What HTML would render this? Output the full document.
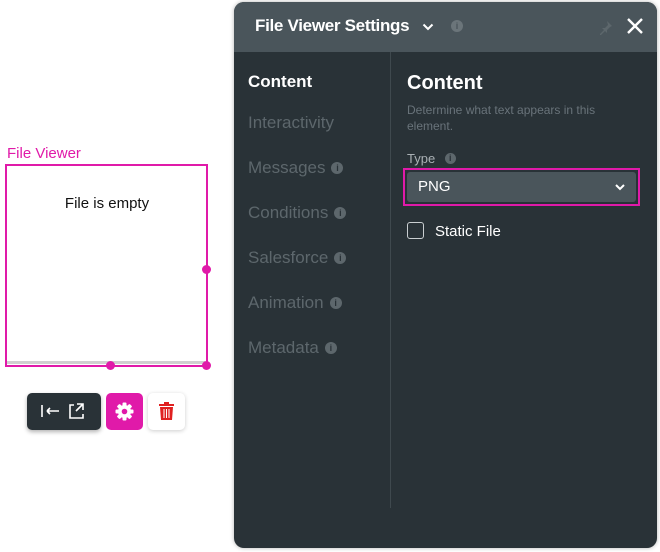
<!DOCTYPE html>
<html><head><style>
body{margin:0;width:660px;height:552px;background:#fff;position:relative;font-family:"Liberation Sans",sans-serif;overflow:hidden}
.a{position:absolute}
.nav{position:absolute;left:248px;font-size:17px;color:#5d676c}
.i{display:inline-block;width:12px;height:12px;border-radius:50%;background:#5d676c;color:#293237;font-size:9px;text-align:center;line-height:12px;font-weight:bold;vertical-align:2px;margin-left:6px}
</style></head><body>
<div class="a" style="left:7px;top:145px;font-size:15px;color:#e01aa9">File Viewer</div>
<div class="a" style="left:5px;top:164px;width:199px;height:199px;border:2px solid #e01aa9;box-sizing:content-box"></div>
<div class="a" style="left:7px;top:361px;width:198px;height:3px;background:#d0d0d0"></div>
<div class="a" style="left:0;top:195px;width:214px;text-align:center;font-size:15px;color:#111">File is empty</div>
<div class="a" style="left:202px;top:265px;width:9px;height:9px;border-radius:50%;background:#e01aa9"></div>
<div class="a" style="left:106px;top:361px;width:9px;height:9px;border-radius:50%;background:#e01aa9"></div>
<div class="a" style="left:202px;top:361px;width:9px;height:9px;border-radius:50%;background:#e01aa9"></div>
<div class="a" style="left:27px;top:393px;width:74px;height:37px;border-radius:5px;background:#293237;box-shadow:0 2px 4px rgba(0,0,0,.3)">
<svg width="74" height="37"><g stroke="#fff" stroke-width="1.6" fill="none"><path d="M15 12v12M20 18h12M20 18l3-3M20 18l3 3"/><path d="M47 12h-4v13h13v-4M50 11h6v6M56 11l-7 7"/></g></svg></div>
<div class="a" style="left:106px;top:393px;width:37px;height:37px;border-radius:5px;background:#e01aa9">
<svg width="37" height="37"><g fill="#fff" transform="translate(18.5 18.5)"><rect x="-2" y="-9" width="4" height="18" rx="1"/><rect x="-2" y="-9" width="4" height="18" rx="1" transform="rotate(45)"/><rect x="-2" y="-9" width="4" height="18" rx="1" transform="rotate(90)"/><rect x="-2" y="-9" width="4" height="18" rx="1" transform="rotate(135)"/><circle r="6.5"/></g><circle cx="18.5" cy="18.5" r="2.8" fill="#e01aa9"/></svg></div>
<div class="a" style="left:148px;top:393px;width:37px;height:37px;border-radius:5px;background:#fff;box-shadow:0 1px 4px rgba(0,0,0,.2)">
<svg width="37" height="37"><rect x="11" y="11" width="15" height="2" fill="#e02020"/><rect x="16" y="9" width="5" height="2" fill="#e02020"/><path d="M12 14h13l-1 13H13z" fill="#e02020"/><g stroke="#fff" stroke-width="1"><path d="M16 16v9M18.5 16v9M21 16v9"/></g></svg></div>
<div class="a" style="left:234px;top:2px;width:423px;height:546px;border-radius:10px;background:#293237;overflow:hidden;box-shadow:0 0 4px rgba(0,0,0,.3)">
<div class="a" style="left:0;top:0;width:423px;height:50px;background:#4a555b"></div>
<div class="a" style="left:21px;top:14px;font-size:17px;letter-spacing:-0.3px;font-weight:bold;color:#fff;white-space:nowrap">File Viewer Settings</div>
<svg class="a" style="left:188px;top:20px" width="12" height="10"><path d="M1.5 2.5L6 7l4.5-4.5" stroke="#fff" stroke-width="2" fill="none"/></svg>
<div class="a" style="left:217px;top:18px;width:12px;height:12px;border-radius:50%;background:#6b757a;color:#4a555b;font-size:9px;text-align:center;line-height:12px;font-weight:bold">i</div>
<svg class="a" style="left:364px;top:17px" width="16" height="16"><path d="M9 2l5 5-2 1-3 3v3l-2-2-4 4-1 0 0-1 4-4-2-2h3l3-3z" fill="#5d676c"/></svg>
<svg class="a" style="left:392px;top:15px" width="18" height="18"><path d="M2 2L16 16M16 2L2 16" stroke="#fff" stroke-width="2.4"/></svg>
<div class="a" style="left:156px;top:50px;width:1px;height:456px;background:#3f494e"></div>
<div class="a" style="left:173px;top:70px;font-size:20px;font-weight:bold;color:#fff">Content</div>
<div class="a" style="left:173px;top:100px;font-size:12px;line-height:16px;color:#69737a">Determine what text appears in this<br>element.</div>
<div class="a" style="left:173px;top:149px;font-size:13px;color:#a9b0b4">Type <span class="i" style="width:11px;height:11px;line-height:11px;background:#5d676c">i</span></div>
<div class="a" style="left:169px;top:166px;width:237px;height:38px;border:2px solid #e01aa9;box-sizing:border-box;padding:2px"><div style="width:100%;height:100%;background:#4a555b;border-radius:3px;color:#fff;font-size:15px;line-height:30px;padding-left:11px;box-sizing:border-box;position:relative">PNG<svg style="position:absolute;right:10px;top:11px" width="12" height="9"><path d="M2 2l4 4 4-4" stroke="#fff" stroke-width="2" fill="none"/></svg></div></div>
<div class="a" style="left:173px;top:220px;width:15px;height:15px;border:1.5px solid #c9ced1;border-radius:3px"></div>
<div class="a" style="left:201px;top:221px;font-size:15px;color:#fff">Static File</div>
</div>
<div class="nav" style="top:72px;color:#fff;font-weight:bold">Content</div>
<div class="nav" style="top:113px">Interactivity</div>
<div class="nav" style="top:158px">Messages<span class="i">i</span></div>
<div class="nav" style="top:203px">Conditions<span class="i">i</span></div>
<div class="nav" style="top:248px">Salesforce<span class="i">i</span></div>
<div class="nav" style="top:293px">Animation<span class="i">i</span></div>
<div class="nav" style="top:338px">Metadata<span class="i">i</span></div>
</body></html>
